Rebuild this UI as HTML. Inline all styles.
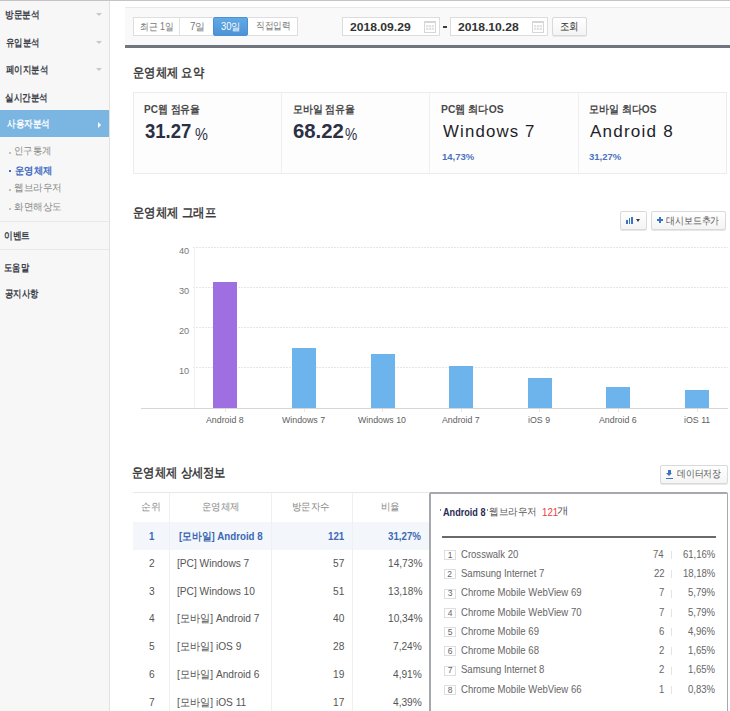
<!DOCTYPE html>
<html><head><meta charset="utf-8">
<style>
*{margin:0;padding:0;box-sizing:border-box}
html,body{width:730px;height:711px;overflow:hidden;background:#fff;font-family:"Liberation Sans",sans-serif;color:#333}
.t{position:absolute;white-space:nowrap;line-height:1;transform-origin:0 0}
.s{position:absolute}
.grid{position:absolute;left:193px;width:535px;height:1px;background:repeating-linear-gradient(90deg,#e6e6e6 0 2px,transparent 2px 3px)}
.bar{position:absolute;width:24px;background:#6db3ec}
.tick{position:absolute;top:409px;width:1px;height:3px;background:#e6e6e6}
.btn{position:absolute;border:1px solid #d9d9d9;background:linear-gradient(#fff,#f4f4f4);border-radius:2px;box-shadow:0 1px 0 #e8e8e8}
.nb{position:absolute;left:444px;width:12px;height:10px;border:1px solid #dedede;background:#fff}
.sep{position:absolute;left:671px;width:1px;height:8px;background:#e4e4e4}
.vl{position:absolute;top:493px;width:1px;height:218px;background:#f0f0f0}
</style></head><body>
<div class="s" style="left:0;top:0;width:730px;height:1px;background:#c4c4c4"></div>
<!-- sidebar -->
<div class="s" style="left:0;top:1px;width:110px;height:710px;background:#f7f7f7;border-right:1px solid #e2e2e2"></div>
<div class="s" style="left:96px;top:13px;border-left:3px solid transparent;border-right:3px solid transparent;border-top:3px solid #c6c8cd"></div>
<div class="s" style="left:96px;top:41px;border-left:3px solid transparent;border-right:3px solid transparent;border-top:3px solid #c6c8cd"></div>
<div class="s" style="left:96px;top:68px;border-left:3px solid transparent;border-right:3px solid transparent;border-top:3px solid #c6c8cd"></div>
<div class="s" style="left:0;top:110px;width:109px;height:27px;background:#7bb6e2"></div>
<div class="s" style="left:98px;top:122px;border-top:3px solid transparent;border-bottom:3px solid transparent;border-left:3px solid #fff"></div>
<div class="s" style="left:9px;top:152px;width:2px;height:2px;background:#c2c2c2"></div>
<div class="s" style="left:9px;top:170px;width:2px;height:2px;background:#3c6ec6"></div>
<div class="s" style="left:9px;top:189px;width:2px;height:2px;background:#c2c2c2"></div>
<div class="s" style="left:9px;top:208px;width:2px;height:2px;background:#c2c2c2"></div>
<div class="s" style="left:0;top:221px;width:109px;height:1px;background:#e8e8e8"></div>
<div class="s" style="left:0;top:249px;width:109px;height:1px;background:#e8e8e8"></div>
<!-- filter -->
<div class="s" style="left:125px;top:7px;width:620px;height:41px;background:#f9f9f9;border-top:1px solid #e8e8e8;border-bottom:3px solid #70757f"></div>
<div class="s" style="left:133px;top:17px;width:165px;height:19px;background:#fff;border:1px solid #dedede"></div>
<div class="s" style="left:179px;top:18px;width:1px;height:17px;background:#e2e2e2"></div>
<div class="s" style="left:213px;top:17px;width:35px;height:19px;background:linear-gradient(#62aae5,#4b93d5);border:1px solid #4a90d2;border-radius:2px"></div>
<div class="s" style="left:342px;top:17px;width:98px;height:19px;background:#fff;border:1px solid #dcdcdc"></div>
<div class="s" style="left:424px;top:21px;width:12px;height:12px;background:#fff;border:1px solid #d6d6d6;border-top-width:2px"></div><div class="s" style="left:426px;top:25px;width:8px;height:5px;background:repeating-linear-gradient(90deg,#e2e2e2 0 2px,#f4f4f4 2px 3px)"></div><div class="s" style="left:426px;top:27px;width:8px;height:1px;background:#f6f6f6"></div>
<div class="s" style="left:442.5px;top:26px;width:4.5px;height:2px;background:#3c3c3c"></div>
<div class="s" style="left:450px;top:17px;width:98px;height:19px;background:#fff;border:1px solid #dcdcdc"></div>
<div class="s" style="left:532px;top:21px;width:12px;height:12px;background:#fff;border:1px solid #d6d6d6;border-top-width:2px"></div><div class="s" style="left:534px;top:25px;width:8px;height:5px;background:repeating-linear-gradient(90deg,#e2e2e2 0 2px,#f4f4f4 2px 3px)"></div><div class="s" style="left:534px;top:27px;width:8px;height:1px;background:#f6f6f6"></div>
<div class="btn" style="left:552px;top:17px;width:35px;height:19px"></div>
<!-- summary -->
<div class="s" style="left:133px;top:92px;width:594px;height:82px;background:#fdfdfd;border:1px solid #ececec"></div>
<div class="s" style="left:281px;top:93px;width:1px;height:80px;background:#efefef"></div>
<div class="s" style="left:429px;top:93px;width:1px;height:80px;background:#efefef"></div>
<div class="s" style="left:578px;top:93px;width:1px;height:80px;background:#efefef"></div>
<!-- chart -->
<div class="btn" style="left:620px;top:211px;width:27px;height:19px"></div>
<div class="s" style="left:626px;top:220px;width:2px;height:4px;background:#3b74c0"></div>
<div class="s" style="left:629px;top:218px;width:1px;height:6px;background:#3b74c0"></div>
<div class="s" style="left:631px;top:217px;width:2px;height:7px;background:#3b74c0"></div>
<div class="s" style="left:636px;top:219px;border-left:2.5px solid transparent;border-right:2.5px solid transparent;border-top:3px solid #3a3a3a"></div>
<div class="btn" style="left:651px;top:211px;width:75px;height:19px"></div>
<div class="s" style="left:656.5px;top:219px;width:6.5px;height:2px;background:#3b74c0"></div>
<div class="s" style="left:658.7px;top:217px;width:2px;height:6px;background:#3b74c0"></div>
<div class="grid" style="top:247px"></div>
<div class="grid" style="top:287px"></div>
<div class="grid" style="top:327px"></div>
<div class="grid" style="top:367px"></div>
<div class="s" style="left:194px;top:248px;width:1px;height:160px;background:#f1f1f1"></div>
<div class="s" style="left:141px;top:408px;width:587px;height:1px;background:#d6d6d6"></div>
<div class="bar" style="left:213px;top:282px;height:126px;background:#9f6fe1"></div>
<div class="bar" style="left:292px;top:348px;height:60px"></div>
<div class="bar" style="left:371px;top:354px;height:54px"></div>
<div class="bar" style="left:449px;top:366px;height:42px"></div>
<div class="bar" style="left:527.5px;top:378px;height:30px"></div>
<div class="bar" style="left:606px;top:387px;height:21px"></div>
<div class="bar" style="left:685px;top:389.5px;height:18.5px"></div>
<div class="tick" style="left:225px"></div><div class="tick" style="left:304px"></div><div class="tick" style="left:382px"></div><div class="tick" style="left:461px"></div><div class="tick" style="left:539px"></div><div class="tick" style="left:618px"></div><div class="tick" style="left:697px"></div>
<!-- detail -->
<div class="btn" style="left:660px;top:465px;width:68px;height:19px"></div>
<div class="s" style="left:668px;top:470px;width:2.5px;height:3px;background:#3b74c0"></div>
<div class="s" style="left:666px;top:473px;border-left:3.3px solid transparent;border-right:3.3px solid transparent;border-top:3.5px solid #3b74c0"></div>
<div class="s" style="left:666px;top:477.5px;width:6.7px;height:1.2px;background:#3b74c0"></div>
<div class="s" style="left:133px;top:492px;width:296px;height:1px;background:#e8e8e8"></div>
<div class="s" style="left:133px;top:522px;width:296px;height:28px;background:#f3f7fb"></div>
<div class="vl" style="left:169px"></div><div class="vl" style="left:271px"></div><div class="vl" style="left:352px"></div>
<div class="s" style="left:429px;top:492px;width:299px;height:230px;border:2px solid #a6a8af;border-width:2px 1px 0 2px;border-radius:2px 2px 0 0"></div>
<div class="s" style="left:439.5px;top:509px;width:1px;height:1.5px;background:#888"></div>
<div class="s" style="left:487px;top:509px;width:1px;height:1.5px;background:#888"></div>
<div class="s" style="left:442px;top:536px;width:274px;height:1.5px;background:#6a6a6a"></div>
<div class="nb" style="top:550px"></div><div class="nb" style="top:569.25px"></div><div class="nb" style="top:588.5px"></div><div class="nb" style="top:607.75px"></div><div class="nb" style="top:627px"></div><div class="nb" style="top:646.25px"></div><div class="nb" style="top:665.5px"></div><div class="nb" style="top:684.75px"></div>
<div class="sep" style="top:551px"></div><div class="sep" style="top:570.25px"></div><div class="sep" style="top:589.5px"></div><div class="sep" style="top:608.75px"></div><div class="sep" style="top:628px"></div><div class="sep" style="top:647.25px"></div><div class="sep" style="top:666.5px"></div><div class="sep" style="top:685.75px"></div>
<div id="s1" class="t" style="left:5.14px;top:9.90px;font-size:10.00px;transform:scaleX(0.8643);color:#3a3d48;font-weight:bold">방문분석</div>
<div id="s2" class="t" style="left:5.65px;top:37.60px;font-size:10.00px;transform:scaleX(0.8398);color:#3a3d48;font-weight:bold">유입분석</div>
<div id="s3" class="t" style="left:5.70px;top:64.80px;font-size:10.00px;transform:scaleX(0.8428);color:#3a3d48;font-weight:bold">페이지분석</div>
<div id="s4" class="t" style="left:5.42px;top:92.60px;font-size:10.00px;transform:scaleX(0.8531);color:#3a3d48;font-weight:bold">실시간분석</div>
<div id="s5" class="t" style="left:6.79px;top:118.80px;font-size:10.00px;transform:scaleX(0.8546);color:#fff;font-weight:bold">사용자분석</div>
<div id="s6" class="t" style="left:14.06px;top:146.48px;font-size:9.60px;transform:scaleX(0.9397);color:#888">인구통계</div>
<div id="s7" class="t" style="left:15.08px;top:165.68px;font-size:9.60px;transform:scaleX(0.9290);color:#3d67c0;font-weight:bold">운영체제</div>
<div id="s8" class="t" style="left:14.04px;top:183.18px;font-size:9.60px;transform:scaleX(0.9591);color:#888">웹브라우저</div>
<div id="s9" class="t" style="left:14.04px;top:202.18px;font-size:9.60px;transform:scaleX(0.9582);color:#888">화면해상도</div>
<div id="s10" class="t" style="left:4.39px;top:230.60px;font-size:10.00px;transform:scaleX(0.8666);color:#3a3d48;font-weight:bold">이벤트</div>
<div id="s11" class="t" style="left:4.42px;top:262.60px;font-size:10.00px;transform:scaleX(0.8345);color:#3a3d48;font-weight:bold">도움말</div>
<div id="s12" class="t" style="left:5.39px;top:289.00px;font-size:10.00px;transform:scaleX(0.8394);color:#3a3d48;font-weight:bold">공지사항</div>
<div id="f1" class="t" style="left:139.98px;top:22.20px;font-size:10.00px;transform:scaleX(0.8769);color:#777">최근 1일</div>
<div id="f2" class="t" style="left:190.36px;top:22.40px;font-size:10.00px;transform:scaleX(0.9792);color:#777">7일</div>
<div id="f3" class="t" style="left:220.64px;top:22.40px;font-size:10.00px;transform:scaleX(0.9306);color:#fff">30일</div>
<div id="f4" class="t" style="left:255.92px;top:21.40px;font-size:10.00px;transform:scaleX(0.8668);color:#777">직접입력</div>
<div id="f5" class="t" style="left:349.79px;top:21.82px;font-size:11.40px;transform:scaleX(1.0641);color:#333;font-weight:bold">2018.09.29</div>
<div id="f6" class="t" style="left:457.60px;top:21.82px;font-size:11.40px;transform:scaleX(1.0636);color:#333;font-weight:bold">2018.10.28</div>
<div id="f7" class="t" style="left:560.41px;top:20.64px;font-size:11.00px;transform:scaleX(0.8610);color:#333">조회</div>
<div id="t1" class="t" style="left:132.68px;top:65.76px;font-size:13.20px;transform:scaleX(0.8678);color:#404040;font-weight:bold">운영체제 요약</div>
<div id="c1" class="t" style="left:143.88px;top:103.86px;font-size:11.20px;transform:scaleX(0.8961);color:#4a4a4a;font-weight:bold">PC웹 점유율</div>
<div id="v1" class="t" style="left:145.05px;top:121.04px;font-size:20.80px;transform:scaleX(0.8905);color:#2b3044;font-weight:bold">31.27</div>
<div id="v1p" class="t" style="left:194.81px;top:126.60px;font-size:16.00px;transform:scaleX(0.9076);color:#2b3044">%</div>
<div id="c2" class="t" style="left:292.72px;top:103.86px;font-size:11.20px;transform:scaleX(0.8993);color:#4a4a4a;font-weight:bold">모바일 점유율</div>
<div id="v2" class="t" style="left:293.20px;top:121.04px;font-size:20.80px;transform:scaleX(0.9778);color:#2b3044;font-weight:bold">68.22</div>
<div id="v2p" class="t" style="left:345.30px;top:126.60px;font-size:16.00px;transform:scaleX(0.8601);color:#2b3044">%</div>
<div id="c3" class="t" style="left:440.88px;top:103.86px;font-size:11.20px;transform:scaleX(0.9223);color:#4a4a4a;font-weight:bold">PC웹 최다OS</div>
<div id="o1" class="t" style="left:442.92px;top:123.16px;font-size:17.20px;transform:scaleX(0.9761);color:#1e1e2a;letter-spacing:1.2px;-webkit-text-stroke:0px">Windows 7</div>
<div id="p1" class="t" style="left:441.76px;top:152.08px;font-size:9.60px;transform:scaleX(0.9892);color:#4a72c0;font-weight:bold">14,73%</div>
<div id="c4" class="t" style="left:588.84px;top:103.86px;font-size:11.20px;transform:scaleX(0.9076);color:#4a4a4a;font-weight:bold">모바일 최다OS</div>
<div id="o2" class="t" style="left:589.84px;top:123.16px;font-size:17.20px;transform:scaleX(0.9943);color:#1e1e2a;letter-spacing:1.2px;-webkit-text-stroke:0px">Android 8</div>
<div id="p2" class="t" style="left:589.00px;top:152.08px;font-size:9.60px;transform:scaleX(0.9892);color:#4a72c0;font-weight:bold">31,27%</div>
<div id="t2" class="t" style="left:133.27px;top:205.96px;font-size:13.20px;transform:scaleX(0.8772);color:#404040;font-weight:bold">운영체제 그래프</div>
<div id="bt1" class="t" style="left:666.35px;top:215.80px;font-size:10.00px;transform:scaleX(0.8898);color:#555">대시보드추가</div>
<div id="y40" class="t" style="left:179.26px;top:246.88px;font-size:8.60px;transform:scaleX(1.0635);color:#777">40</div>
<div id="y30" class="t" style="left:178.90px;top:286.88px;font-size:8.60px;transform:scaleX(1.0635);color:#777">30</div>
<div id="y20" class="t" style="left:178.90px;top:326.88px;font-size:8.60px;transform:scaleX(1.0635);color:#777">20</div>
<div id="y10" class="t" style="left:178.90px;top:366.88px;font-size:8.60px;transform:scaleX(1.0635);color:#777">10</div>
<div id="x2" class="t" style="left:358.00px;top:416.24px;font-size:8.80px;transform:scaleX(1.0011);color:#606060">Windows 10</div>
<div id="x0" class="t" style="left:206.20px;top:416.24px;font-size:8.80px;transform:scaleX(1.0011);color:#606060">Android 8</div>
<div id="x1" class="t" style="left:281.90px;top:416.24px;font-size:8.80px;transform:scaleX(1.0011);color:#606060">Windows 7</div>
<div id="x3" class="t" style="left:441.90px;top:416.24px;font-size:8.80px;transform:scaleX(1.0011);color:#606060">Android 7</div>
<div id="x4" class="t" style="left:528.00px;top:416.24px;font-size:8.80px;transform:scaleX(1.0011);color:#606060">iOS 9</div>
<div id="x5" class="t" style="left:599.20px;top:416.24px;font-size:8.80px;transform:scaleX(1.0011);color:#606060">Android 6</div>
<div id="x6" class="t" style="left:684.20px;top:416.24px;font-size:8.80px;transform:scaleX(1.0011);color:#606060">iOS 11</div>
<div id="t3" class="t" style="left:132.34px;top:466.16px;font-size:13.20px;transform:scaleX(0.8715);color:#404040;font-weight:bold">운영체제 상세정보</div>
<div id="bt2" class="t" style="left:676.83px;top:468.70px;font-size:10.00px;transform:scaleX(0.8806);color:#555">데이터저장</div>
<div id="th1" class="t" style="left:140.66px;top:502.24px;font-size:10.30px;transform:scaleX(0.9889);color:#888">순위</div>
<div id="th2" class="t" style="left:202.05px;top:502.24px;font-size:10.30px;transform:scaleX(0.9485);color:#888">운영체제</div>
<div id="th3" class="t" style="left:292.45px;top:502.24px;font-size:10.30px;transform:scaleX(0.9483);color:#888">방문자수</div>
<div id="th4" class="t" style="left:381.25px;top:502.24px;font-size:10.30px;transform:scaleX(0.9498);color:#888">비율</div>
<div id="r0c2" class="t" style="left:178.60px;top:530.80px;font-size:11.00px;transform:scaleX(0.8832);color:#3d67b5;font-weight:bold">[모바일] Android 8</div>
<div id="r0c1" class="t" style="left:149.15px;top:530.80px;font-size:11.00px;transform:scaleX(0.8832);color:#3d67b5;font-weight:bold">1</div>
<div id="r0c3" class="t" style="left:327.80px;top:530.80px;font-size:11.00px;transform:scaleX(0.8832);color:#3d67b5;font-weight:bold">121</div>
<div id="r0c4" class="t" style="left:387.90px;top:530.80px;font-size:11.00px;transform:scaleX(0.8832);color:#3d67b5;font-weight:bold">31,27%</div>
<div id="r1c2" class="t" style="left:177.39px;top:557.80px;font-size:11.00px;transform:scaleX(0.9236);color:#555">[PC] Windows 7</div>
<div id="r1c1" class="t" style="left:149.00px;top:557.80px;font-size:11.00px;transform:scaleX(0.9236);color:#555">2</div>
<div id="r1c3" class="t" style="left:333.30px;top:557.80px;font-size:11.00px;transform:scaleX(0.9236);color:#555">57</div>
<div id="r1c4" class="t" style="left:387.50px;top:557.80px;font-size:11.00px;transform:scaleX(0.9236);color:#555">14,73%</div>
<div id="r2c1" class="t" style="left:149.00px;top:585.55px;font-size:11.00px;transform:scaleX(0.9236);color:#555">3</div>
<div id="r2c2" class="t" style="left:177.39px;top:585.55px;font-size:11.00px;transform:scaleX(0.9236);color:#555">[PC] Windows 10</div>
<div id="r2c3" class="t" style="left:333.30px;top:585.55px;font-size:11.00px;transform:scaleX(0.9236);color:#555">51</div>
<div id="r2c4" class="t" style="left:387.50px;top:585.55px;font-size:11.00px;transform:scaleX(0.9236);color:#555">13,18%</div>
<div id="r3c1" class="t" style="left:148.50px;top:613.30px;font-size:11.00px;transform:scaleX(0.9236);color:#555">4</div>
<div id="r3c2" class="t" style="left:177.39px;top:613.30px;font-size:11.00px;transform:scaleX(0.9236);color:#555">[모바일] Android 7</div>
<div id="r3c3" class="t" style="left:333.30px;top:613.30px;font-size:11.00px;transform:scaleX(0.9236);color:#555">40</div>
<div id="r3c4" class="t" style="left:387.50px;top:613.30px;font-size:11.00px;transform:scaleX(0.9236);color:#555">10,34%</div>
<div id="r4c1" class="t" style="left:149.00px;top:641.05px;font-size:11.00px;transform:scaleX(0.9236);color:#555">5</div>
<div id="r4c2" class="t" style="left:177.39px;top:641.05px;font-size:11.00px;transform:scaleX(0.9236);color:#555">[모바일] iOS 9</div>
<div id="r4c3" class="t" style="left:333.30px;top:641.05px;font-size:11.00px;transform:scaleX(0.9236);color:#555">28</div>
<div id="r4c4" class="t" style="left:392.50px;top:641.05px;font-size:11.00px;transform:scaleX(0.9236);color:#555">7,24%</div>
<div id="r5c1" class="t" style="left:149.00px;top:668.80px;font-size:11.00px;transform:scaleX(0.9236);color:#555">6</div>
<div id="r5c2" class="t" style="left:177.39px;top:668.80px;font-size:11.00px;transform:scaleX(0.9236);color:#555">[모바일] Android 6</div>
<div id="r5c3" class="t" style="left:333.30px;top:668.80px;font-size:11.00px;transform:scaleX(0.9236);color:#555">19</div>
<div id="r5c4" class="t" style="left:392.50px;top:668.80px;font-size:11.00px;transform:scaleX(0.9236);color:#555">4,91%</div>
<div id="r6c1" class="t" style="left:149.00px;top:696.55px;font-size:11.00px;transform:scaleX(0.9236);color:#555">7</div>
<div id="r6c2" class="t" style="left:177.39px;top:696.55px;font-size:11.00px;transform:scaleX(0.9236);color:#555">[모바일] iOS 11</div>
<div id="r6c3" class="t" style="left:333.30px;top:696.55px;font-size:11.00px;transform:scaleX(0.9236);color:#555">17</div>
<div id="r6c4" class="t" style="left:392.50px;top:696.55px;font-size:11.00px;transform:scaleX(0.9236);color:#555">4,39%</div>
<div id="pa" class="t" style="left:442.86px;top:508.14px;font-size:10.30px;transform:scaleX(0.8834);color:#2a2a55;font-weight:bold">Android 8</div>
<div id="pw" class="t" style="left:488.67px;top:507.04px;font-size:9.80px;transform:scaleX(0.9551);color:#555">웹브라우저</div>
<div id="pn" class="t" style="left:542.18px;top:508.32px;font-size:10.40px;transform:scaleX(0.9398);color:#f03c3c">121</div>
<div id="pg" class="t" style="left:557.08px;top:506.04px;font-size:9.80px;transform:scaleX(1.1516);color:#555">개</div>
<div id="l3n" class="t" style="left:461.22px;top:606.70px;font-size:11.00px;transform:scaleX(0.8671);color:#666">Chrome Mobile WebView 70</div>
<div id="l0n" class="t" style="left:461.22px;top:548.95px;font-size:11.00px;transform:scaleX(0.8671);color:#666">Crosswalk 20</div>
<div id="l0v" class="t" style="left:653.00px;top:548.95px;font-size:11.00px;transform:scaleX(0.8671);color:#666">74</div>
<div id="l0p" class="t" style="left:683.30px;top:548.95px;font-size:11.00px;transform:scaleX(0.8671);color:#666">61,16%</div>
<div id="ld0" class="t" style="left:447.75px;top:550.95px;font-size:8.50px;transform:scaleX(1.0000);color:#666">1</div>
<div id="l1n" class="t" style="left:461.22px;top:568.20px;font-size:11.00px;transform:scaleX(0.8671);color:#666">Samsung Internet 7</div>
<div id="l1v" class="t" style="left:654.00px;top:568.20px;font-size:11.00px;transform:scaleX(0.8671);color:#666">22</div>
<div id="l1p" class="t" style="left:683.30px;top:568.20px;font-size:11.00px;transform:scaleX(0.8671);color:#666">18,18%</div>
<div id="ld1" class="t" style="left:447.25px;top:570.20px;font-size:8.50px;transform:scaleX(1.0000);color:#666">2</div>
<div id="l2n" class="t" style="left:461.22px;top:587.45px;font-size:11.00px;transform:scaleX(0.8671);color:#666">Chrome Mobile WebView 69</div>
<div id="l2v" class="t" style="left:659.00px;top:587.45px;font-size:11.00px;transform:scaleX(0.8671);color:#666">7</div>
<div id="l2p" class="t" style="left:688.30px;top:587.45px;font-size:11.00px;transform:scaleX(0.8671);color:#666">5,79%</div>
<div id="ld2" class="t" style="left:447.75px;top:589.45px;font-size:8.50px;transform:scaleX(1.0000);color:#666">3</div>
<div id="l3v" class="t" style="left:659.00px;top:606.70px;font-size:11.00px;transform:scaleX(0.8671);color:#666">7</div>
<div id="l3p" class="t" style="left:688.30px;top:606.70px;font-size:11.00px;transform:scaleX(0.8671);color:#666">5,79%</div>
<div id="ld3" class="t" style="left:447.75px;top:608.70px;font-size:8.50px;transform:scaleX(1.0000);color:#666">4</div>
<div id="l4n" class="t" style="left:461.22px;top:625.95px;font-size:11.00px;transform:scaleX(0.8671);color:#666">Chrome Mobile 69</div>
<div id="l4v" class="t" style="left:659.00px;top:625.95px;font-size:11.00px;transform:scaleX(0.8671);color:#666">6</div>
<div id="l4p" class="t" style="left:688.30px;top:625.95px;font-size:11.00px;transform:scaleX(0.8671);color:#666">4,96%</div>
<div id="ld4" class="t" style="left:447.75px;top:627.95px;font-size:8.50px;transform:scaleX(1.0000);color:#666">5</div>
<div id="l5n" class="t" style="left:461.22px;top:645.20px;font-size:11.00px;transform:scaleX(0.8671);color:#666">Chrome Mobile 68</div>
<div id="l5v" class="t" style="left:659.00px;top:645.20px;font-size:11.00px;transform:scaleX(0.8671);color:#666">2</div>
<div id="l5p" class="t" style="left:688.30px;top:645.20px;font-size:11.00px;transform:scaleX(0.8671);color:#666">1,65%</div>
<div id="ld5" class="t" style="left:447.75px;top:647.20px;font-size:8.50px;transform:scaleX(1.0000);color:#666">6</div>
<div id="l6n" class="t" style="left:461.22px;top:664.45px;font-size:11.00px;transform:scaleX(0.8671);color:#666">Samsung Internet 8</div>
<div id="l6v" class="t" style="left:659.00px;top:664.45px;font-size:11.00px;transform:scaleX(0.8671);color:#666">2</div>
<div id="l6p" class="t" style="left:688.30px;top:664.45px;font-size:11.00px;transform:scaleX(0.8671);color:#666">1,65%</div>
<div id="ld6" class="t" style="left:447.75px;top:666.45px;font-size:8.50px;transform:scaleX(1.0000);color:#666">7</div>
<div id="l7n" class="t" style="left:461.22px;top:683.70px;font-size:11.00px;transform:scaleX(0.8671);color:#666">Chrome Mobile WebView 66</div>
<div id="l7v" class="t" style="left:659.00px;top:683.70px;font-size:11.00px;transform:scaleX(0.8671);color:#666">1</div>
<div id="l7p" class="t" style="left:688.30px;top:683.70px;font-size:11.00px;transform:scaleX(0.8671);color:#666">0,83%</div>
<div id="ld7" class="t" style="left:447.75px;top:685.70px;font-size:8.50px;transform:scaleX(1.0000);color:#666">8</div>
</body></html>
